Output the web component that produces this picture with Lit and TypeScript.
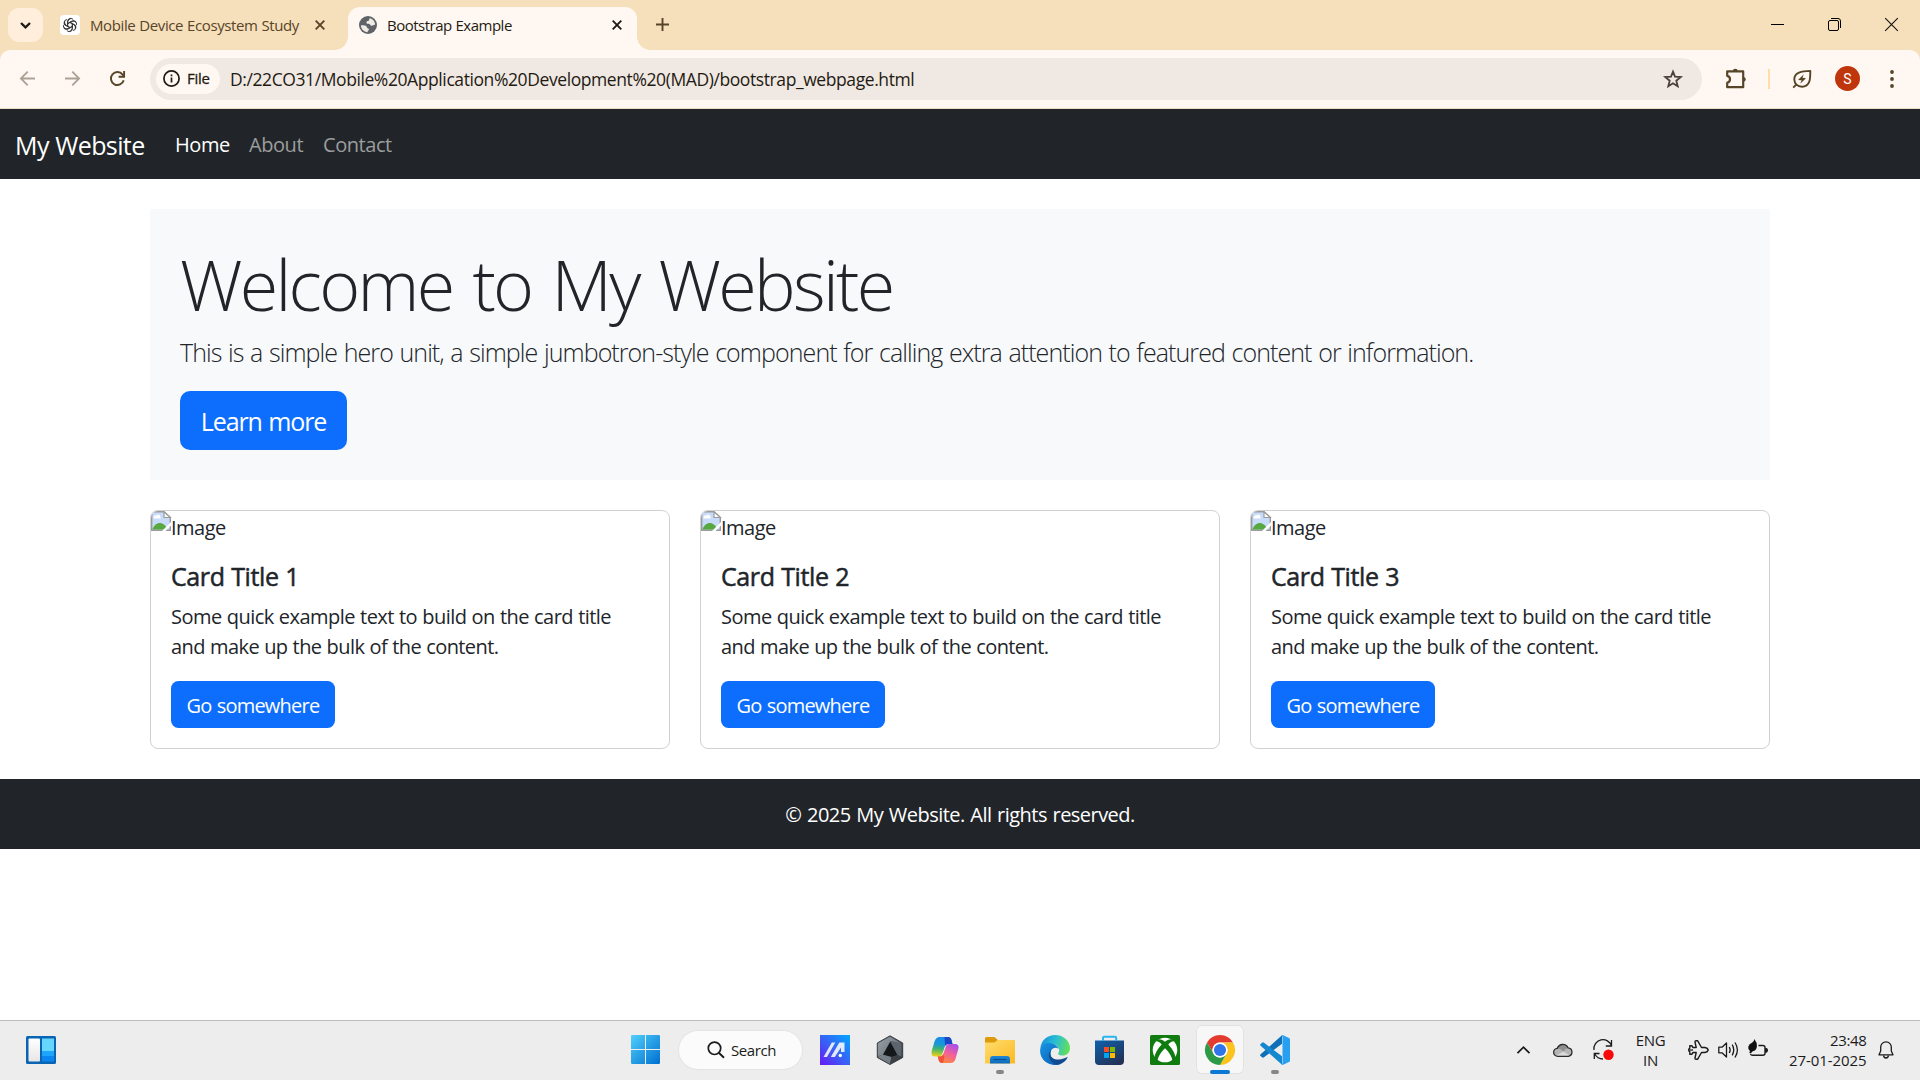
import { LitElement, html, css, nothing } from "lit";
import { customElement, property } from "lit/decorators.js";

const base = css`
  * { box-sizing: border-box; }
  svg { display: block; flex: none; overflow: visible; }
  span { white-space: nowrap; }
`;

/* ---------- browser window frame ---------- */

const gptIcon = html`<svg width="20" height="20" viewBox="0 0 20 20"><rect width="20" height="20" rx="4" fill="#fff"/>
  <g fill="none" stroke="#333" stroke-width=".95" transform="translate(10 10)">
    <g id="petal"><path d="M-2.400 1.400V-3.400Q-2.300 -6.400 .4 -6.600 2.200 -6.700 3.200 -5.400M-2.400 -1.200 1.700 -3.600Q4.300 -4.700 6 -2.600"/></g>
    <use href="#petal" transform="rotate(60)"/><use href="#petal" transform="rotate(120)"/><use href="#petal" transform="rotate(180)"/><use href="#petal" transform="rotate(240)"/><use href="#petal" transform="rotate(300)"/>
  </g></svg>`;

const globeIcon = html`<svg width="18" height="18" viewBox="0 0 18 18"><circle cx="9" cy="9" r="9" fill="#5f6368"/>
  <path d="M10.500 2.200C14 2.700 16 5.500 16.200 8.600 14.800 8.800 14.200 9.800 12.800 9.800 11.200 9.800 11.600 8.200 10.300 7.900 9 7.700 7.600 7.900 7.400 6.500 7.300 5.200 8.500 5 9.500 4.800 10.600 4.400 9.900 3 10.500 2.200Z" fill="#fff8f2" opacity=".9"/>
  <path d="M1.900 9.300C3.500 9.300 5.500 9.100 7 10 8.300 10.800 7.800 12.200 9.200 12.600 10.300 13 10.200 14 9.300 14.500 8.600 15 8.700 15.800 8.500 16.200 4.800 15.900 1.900 12.900 1.900 9.300Z" fill="#fff8f2" opacity=".9"/></svg>`;

const closeIcon = (color: string) => html`<svg width="10" height="10" viewBox="0 0 10 10"><path d="M.7.7 9.300 9.300M9.300.7.7 9.300" stroke=${color} stroke-width="1.900" fill="none"/></svg>`;

@customElement("browser-frame")
class BrowserFrame extends LitElement {
  static styles = [base, css`
    :host { display: flex; flex-direction: column; height: 109px; background: #f6dfbb; color: #1f1b13; font: 15px/20px "Open Sans", "Noto Sans", sans-serif; }
    .tabs { display: flex; height: 50px; padding-left: 8px; }
    .finder { width: 35px; height: 34px; margin-top: 8px; border-radius: 11px; background: #ffeedb; display: grid; place-items: center; }
    .tab { display: flex; align-items: center; height: 50px; width: 305px; padding-left: 17px; color: #564529; }
    .name { margin-left: 10px; width: 225px; letter-spacing: -0.39px; word-spacing: 0.4px; padding-bottom: 1px; }
    .active { position: relative; width: 289px; height: 43px; margin-top: 7px; padding: 0 0 7px 11px; background: #fff8f2; border-radius: 12px 12px 0 0; color: #1f1b13; }
    .active .name { letter-spacing: -0.5px; }
    .active::before, .active::after { content: ""; position: absolute; bottom: 0; width: 13px; height: 13px; }
    .active::before { left: -13px; background: radial-gradient(circle at 0 0, transparent 12.5px, #fff8f2 13px); }
    .active::after { right: -13px; background: radial-gradient(circle at 100% 0, transparent 12.5px, #fff8f2 13px); }
    .plus { margin: 18px 0 0 19px; }
    .win { display: flex; gap: 44px; margin: 18px 22px 0 auto; }
    .bar { display: flex; align-items: center; height: 59px; padding: 0 0 1px 20px; background: #fff8f2; border-radius: 10px 10px 0 0; border-bottom: 1px solid #ecdcc3; }
    .nav { display: flex; gap: 30px; width: 130px; }
    .omni { display: flex; align-items: center; width: 1552px; height: 42px; padding: 0 19px 0 6px; border-radius: 21px; background: #f0e8e2; }
    .chip { display: flex; align-items: center; gap: 7px; width: 64px; height: 30px; padding-left: 7px; border-radius: 15px; background: #fff8f2; letter-spacing: -0.3px; -webkit-text-stroke: 0.3px #1f1b13; }
    .chip span { padding-bottom: 1px; }
    .url { flex: 1; margin-left: 10px; font-size: 17.5px; line-height: 24px; letter-spacing: -0.41px; padding-top: 1px; }
    .puzzle { margin-left: 23px; }
    .sep { width: 2px; height: 20px; margin: 0 22px 0 21px; background: #ffdea6; }
    .avatar { width: 25px; height: 25px; margin: 0 30px 0 23px; border-radius: 50%; background: #bf360c; color: #fff; font: 14px/26px Roboto, "Open Sans", sans-serif; text-align: center; }
  `];
  render() {
    return html`
      <div class="tabs">
        <div class="finder"><svg width="11" height="7" viewBox="0 0 11 7"><path d="M1 1 5.500 5.400 10 1" fill="none" stroke="#1f1b13" stroke-width="2.300"/></svg></div>
        <div class="tab">${gptIcon}<span class="name">Mobile Device Ecosystem Study</span>${closeIcon("#564529")}</div>
        <div class="tab active">${globeIcon}<span class="name">Bootstrap Example</span>${closeIcon("#1f1b13")}</div>
        <svg class="plus" width="13" height="13" viewBox="0 0 13 13"><path d="M6.500 0V13M0 6.500H13" stroke="#564529" stroke-width="1.900"/></svg>
        <div class="win">
          <svg width="13" height="13" viewBox="0 0 13 13"><path d="M0 6.500H13" stroke="#000" stroke-width="1"/></svg>
          <svg width="13" height="13" viewBox="0 0 13 13"><rect x=".5" y="2.500" width="10" height="10" rx="1.500" fill="none" stroke="#000"/><path d="M3 .5H10Q12.500.5 12.500 3V10" fill="none" stroke="#000"/></svg>
          <svg width="13" height="13" viewBox="0 0 13 13"><path d="M.2.2 12.800 12.800M12.800.2.2 12.800" stroke="#111" stroke-width="1.100"/></svg>
        </div>
      </div>
      <div class="bar">
        <div class="nav">
          <svg width="15" height="15" viewBox="0 0 15 15"><path d="M15 7.500H1.500M7.700.7.900 7.500 7.700 14.300" fill="none" stroke="#aba296" stroke-width="1.800"/></svg>
          <svg width="15" height="15" viewBox="0 0 15 15"><path d="M0 7.500H13.500M7.300.7 14.100 7.500 7.300 14.300" fill="none" stroke="#aba296" stroke-width="1.800"/></svg>
          <svg width="15" height="15" viewBox="0 0 15 15"><path d="M13.700 9.200A6.500 6.500 0 1 1 12.600 3.600L14 5.200" fill="none" stroke="#564529" stroke-width="1.900"/><path d="M14.100 0V5.800H8.600" fill="none" stroke="#564529" stroke-width="1.900"/></svg>
        </div>
        <div class="omni">
          <div class="chip"><svg width="17" height="17" viewBox="0 0 17 17"><circle cx="8.500" cy="8.500" r="7.600" fill="none" stroke="#1f1b13" stroke-width="1.700"/><path d="M8.500 7.600V12.500M8.500 4.500V6.200" stroke="#1f1b13" stroke-width="1.700"/></svg><span>File</span></div>
          <span class="url">D:/22CO31/Mobile%20Application%20Development%20(MAD)/bootstrap_webpage.html</span>
          <svg width="20" height="20" viewBox="0 0 20 20"><path d="M10 2.600 12 7.700 17.700 8.100 13.300 11.700 14.700 17.200 10 14.200 5.300 17.200 6.700 11.700 2.300 8.100 8 7.700Z" fill="none" stroke="#4a4239" stroke-width="1.800"/></svg>
        </div>
        <svg class="puzzle" width="22" height="22" viewBox="0 0 22 22"><path d="M3 3.400H18.200V19.200H2.200V14.800Q5 14.200 5 11.300 5 8.400 2.200 7.800V3.400Z" fill="none" stroke="#564529" stroke-width="2.200" stroke-linejoin="round"/><path d="M7.800 3Q8 .7 10.300.7 12.600.7 12.800 3ZM18.500 9Q20.800 9.200 20.800 11.300 20.800 13.500 18.500 13.700Z" fill="#564529"/></svg>
        <div class="sep"></div>
        <svg width="20" height="20" viewBox="0 0 20 20"><path d="M18.300 1.900C18.300 9 18.500 17.600 10 17.700 5.500 17.700 2.300 14.700 2.300 10.300 2.300 3.500 9.500 1.900 18.300 1.900Z" fill="none" stroke="#564529" stroke-width="1.900" stroke-linejoin="round"/><path d="M1.200 18.600 4.600 15.300" stroke="#564529" stroke-width="1.900"/><path d="M11.800 5.200 6 10.900 9.600 11.300 8.200 14.800 14 9.300 10.500 8.800Z" fill="#564529"/></svg>
        <div class="avatar">S</div>
        <svg width="4" height="18" viewBox="0 0 4 18"><g fill="#564529"><circle cx="2" cy="2" r="1.900"/><circle cx="2" cy="9" r="1.900"/><circle cx="2" cy="16" r="1.900"/></g></svg>
      </div>`;
  }
}

/* ---------- page content ---------- */

@customElement("site-card")
class SiteCard extends LitElement {
  static styles = [base, css`
    :host { display: flex; flex-direction: column; flex: 1; height: 239px; border: 1px solid #d0d1d2; border-radius: 8px; background: #fff; overflow: hidden; color: #212529; box-sizing: border-box; font: 20px/30px "Open Sans", "Noto Sans", sans-serif; }
    .pic { display: flex; height: 35px; }
    .alt { padding-top: 2px; letter-spacing: -0.5px; }
    .body { display: flex; flex-direction: column; align-items: flex-start; padding: 15px 20px; }
    .title { font-size: 25px; line-height: 30px; margin-bottom: 11px; letter-spacing: -0.4px; word-spacing: 0.6px; -webkit-text-stroke: 0.5px #212529; }
    .copy { display: flex; flex-direction: column; margin-bottom: 19px; letter-spacing: -0.54px; word-spacing: 0.5px; }
    .last { letter-spacing: -0.58px; }
    .btn { height: 47px; line-height: 49px; width: 164px; text-align: center; border-radius: 7.5px; background: #0d6efd; color: #fff; letter-spacing: -0.77px; word-spacing: 0.6px; }
  `];
  @property({ type: Number }) index = 1;
  render() {
    return html`
      <div class="pic">
        <svg width="20" height="20" viewBox="0 0 20 20"><path d="M.7 .7H13L19.300 6.500V19.300H.7Z" fill="#c9dbfb" stroke="#9b9b9b" stroke-width="1.400"/><path d="M13 .7V6.500H19.300Z" fill="#fff" stroke="#9b9b9b" stroke-width="1.200"/><path d="M2.500 7.500C2 4.500 5 3.500 6 4.500 7 2.500 10 4 9.500 7.500Z" fill="#fff"/><path d="M1.400 18.600C3 14 7 11 11 12.500 14 13.500 15.500 16 16.500 18.600Z" fill="#57a840"/><path d="M10.500 20.500 20.500 10.500V14L14 20.500Z" fill="#fff"/></svg>
        <span class="alt">Image</span>
      </div>
      <div class="body">
        <span class="title">Card Title ${this.index}</span>
        <div class="copy"><span>Some quick example text to build on the card title</span><span class="last">and make up the bulk of the content.</span></div>
        <span class="btn">Go somewhere</span>
      </div>`;
  }
}

@customElement("site-page")
class SitePage extends LitElement {
  static styles = [base, css`
    :host { display: flex; flex-direction: column; flex: 1; background: #fff; color: #212529; font: 20px/30px "Open Sans", "Noto Sans", sans-serif; }
    .navbar { display: flex; align-items: center; height: 70px; padding: 2px 0 0 15px; background: #212529; color: #fff; }
    .brand { width: 160px; font-size: 25px; letter-spacing: -0.6px; word-spacing: 0.5px; padding-bottom: 1px; }
    .link { width: 74px; letter-spacing: -0.45px; }
    .muted { color: #9b9d9e; }
    main { display: flex; flex-direction: column; gap: 30px; padding: 30px 150px; }
    .hero { display: flex; flex-direction: column; align-items: flex-start; height: 271px; padding: 33px 30px 30px; background: #f8f9fa; }
    .hero h1 { margin: 0 0 7px; font-size: 70px; line-height: 84px; font-weight: 300; letter-spacing: -2.7px; word-spacing: 4.5px; white-space: nowrap; }
    .lead { font-size: 25px; line-height: 38px; font-weight: 300; letter-spacing: -0.92px; word-spacing: 1px; margin-bottom: 20px; }
    .btn { width: 167px; height: 59px; line-height: 61px; border-radius: 10px; background: #0d6efd; color: #fff; font-size: 25px; letter-spacing: -1.1px; word-spacing: 1px; text-align: center; }
    .cards { display: flex; gap: 30px; }
    footer { height: 70px; padding-top: 21px; background: #212529; color: #fff; text-align: center; letter-spacing: -0.54px; word-spacing: 1px; }
  `];
  render() {
    return html`
      <div class="navbar"><span class="brand">My Website</span><span class="link">Home</span><span class="link muted">About</span><span class="link muted">Contact</span></div>
      <main>
        <div class="hero">
          <h1>Welcome to My Website</h1>
          <span class="lead">This is a simple hero unit, a simple jumbotron-style component for calling extra attention to featured content or information.</span>
          <span class="btn">Learn more</span>
        </div>
        <div class="cards">${[1, 2, 3].map((n) => html`<site-card .index=${n}></site-card>`)}</div>
      </main>
      <footer><span>© 2025 My Website. All rights reserved.</span></footer>`;
  }
}

/* ---------- desktop taskbar ---------- */

const apps = [
  { mark: "", icon: html`<svg width="30" height="30" viewBox="0 0 30 30"><defs><linearGradient id="aa" x1="0" y1="1" x2="1" y2="0"><stop offset="0" stop-color="#6a18f5"/><stop offset=".45" stop-color="#3b5cf5"/><stop offset="1" stop-color="#00a8ff"/></linearGradient></defs><rect width="30" height="30" fill="url(#aa)"/><path d="M3.500 22 11.800 7.500H15.300L7 22Z" fill="#fff" opacity=".85"/><path d="M10.800 22 19.300 7.500H24.500V17H21V12.500L14.800 22Z" fill="#fff" opacity=".85"/><circle cx="20.300" cy="20.500" r="1.700" fill="#fff"/></svg>` },
  { mark: "", icon: html`<svg width="30" height="30" viewBox="0 0 30 30"><defs><linearGradient id="hx" x1="0" y1="0" x2="1" y2="1"><stop offset="0" stop-color="#8a9299"/><stop offset=".5" stop-color="#4a5056"/><stop offset="1" stop-color="#22262a"/></linearGradient></defs><path d="M15 .8 27.700 8V22.500L15 29.500 2.300 22.500V8Z" fill="url(#hx)" stroke="#383d42" stroke-width="1"/><path d="M15 2 26.500 8.500 16 6 8 20 3 21V8.500Z" fill="#aab2b9" opacity=".5"/><path d="M15.300 6.500 22.500 20 16.500 22 8 19.700Z" fill="#15181b"/><path d="M15.300 6.500 26.500 8.500V22L22.500 20Z" fill="#5d656c"/><path d="M3 22 8 19.700 16.500 22 15 29Z" fill="#8d959c" opacity=".7"/><path d="M16.500 22 22.500 20 27 22 15 29Z" fill="#3a4046"/></svg>` },
  { mark: "", icon: html`<svg width="30" height="30" viewBox="0 0 30 30"><defs><linearGradient id="c1" x1=".3" y1="0" x2=".2" y2="1"><stop offset="0" stop-color="#1b8be8"/><stop offset=".35" stop-color="#1697d8"/><stop offset=".6" stop-color="#3cb371"/><stop offset="1" stop-color="#f4d30f"/></linearGradient><linearGradient id="c2" x1=".8" y1="0" x2=".3" y2="1"><stop offset="0" stop-color="#a44df0"/><stop offset=".5" stop-color="#f3609a"/><stop offset="1" stop-color="#ff8a3c"/></linearGradient></defs>
    <path d="M9.500 2H18Q20.500 2 21.500 5L22.500 9H18Q15.500 9 14.800 11.500L12.300 19Q11.500 21.500 9 21.500H5Q.5 21.500 1.700 16L4.500 6.500Q6 2 9.500 2Z" fill="url(#c1)"/><path d="M14.500 2H18Q20.500 2 21.500 5L22.500 9H18Q16 9 15.200 11Z" fill="#1c46c8"/><path d="M20.500 28H12Q9.500 28 8.700 25L7.700 21.500H10Q12.500 21.500 13.300 19L16 11Q16.800 8.800 19.500 9H25.500Q29.500 9.300 28.300 14L25.500 24Q24.300 28 20.500 28Z" fill="url(#c2)"/><path d="M7.700 21.500H10Q12.500 21.500 13.300 19L14.500 22 13 28H12Q9.500 28 8.700 25Z" fill="#f0523a"/></svg>` },
  { mark: "dot", icon: html`<svg width="30" height="30" viewBox="0 0 30 30"><defs><linearGradient id="fo" x1="0" y1="0" x2="1" y2="1"><stop offset="0" stop-color="#ffdd6e"/><stop offset="1" stop-color="#fbb921"/></linearGradient><linearGradient id="fb" x1="0" y1="0" x2="0" y2="1"><stop offset="0" stop-color="#1c86d6"/><stop offset="1" stop-color="#0f6cbd"/></linearGradient></defs><path d="M0 3.500Q0 2 1.500 2H9.500L12.800 5H28.500Q30 5 30 6.500V14H0Z" fill="#dd9a0a"/><path d="M0 7.500H9.500L12.500 5H28.700Q30 5 30 6.500V28.500H0Z" fill="url(#fo)"/><path d="M5 28.500V24Q5 21 8 21H22Q25 21 25 24V28.500Z" fill="url(#fb)"/><path d="M8.500 24.500H21.500" stroke="#0b4f8f" stroke-width="1.200"/></svg>` },
  { mark: "", icon: html`<svg width="30" height="30" viewBox="0 0 30 30"><defs><linearGradient id="e1" x1="0" y1=".3" x2="1" y2=".5"><stop offset="0" stop-color="#1590dc"/><stop offset=".5" stop-color="#2bbfd2"/><stop offset="1" stop-color="#62e05a"/></linearGradient><linearGradient id="e2" x1="0" y1="0" x2=".8" y2="1"><stop offset="0" stop-color="#1795e4"/><stop offset="1" stop-color="#0b62b8"/></linearGradient></defs>
    <path d="M.3 13C1.500 5 7.500 0 15 0 24 0 30 6.500 30 13 30 18 26.500 20.500 22.500 20.500 19 20.500 17.500 19.300 18.500 17.800 20.500 15 18.500 10.300 13 9.300 7.500 8.300 2 10.500.3 13Z" fill="url(#e1)"/><path d="M.2 14C1.500 9.500 6 7.500 10.500 8.200 15 9 18 11 19 14.500 17.500 11.800 12.500 12 11 16 9.500 21 13 28.500 20.500 29 18.500 30 15 30.200 12.500 29.800 4.500 28.500-.8 21.500.2 14Z" fill="url(#e2)"/><path d="M11 15C8.500 20 11.500 24 17 24.500 21.500 25 25 23 27.800 21.800 26.500 25.500 23 28.500 18.500 29.600 10.500 29.500 6 20 11 15Z" fill="#114a8f"/><path d="M12 15A4.200 4.200 0 0 1 19 16.500 19.500 18.500 17 18.800 18.800 19.800 15.500 21.500 11.500 18.500 12 15Z" fill="#ededed"/></svg>` },
  { mark: "", icon: html`<svg width="30" height="30" viewBox="0 0 30 30"><defs><linearGradient id="st" x1="0" y1="0" x2=".7" y2="1"><stop offset="0" stop-color="#0f62ad"/><stop offset="1" stop-color="#223257"/></linearGradient></defs><path d="M0 5.500H29V26Q29 30 25 30H4Q0 30 0 26Z" fill="url(#st)"/><path d="M8 6V3Q8 1.800 9.200 1.800H20Q21.200 1.800 21.200 3V6" fill="none" stroke="#2bb5ee" stroke-width="2"/><path d="M9 12H14V17H9Z" fill="#f25022"/><path d="M15 12H20V17H15Z" fill="#7fba00"/><path d="M9 18H14V23H9Z" fill="#00a4ef"/><path d="M15 18H20V23H15Z" fill="#ffb900"/></svg>` },
  { mark: "", icon: html`<svg width="30" height="30" viewBox="0 0 30 30"><rect width="30" height="30" rx="1.500" fill="#107c10"/><circle cx="15" cy="15" r="12.300" fill="#fff"/><path d="M7.500 4.500C10 3.700 13 5 15 6.700 17 5 20 3.700 22.500 4.500L25 6.500C22.500 5.500 20 7.500 18.300 9.600 22.500 14 26 20 25.300 23.500L22.500 26.200C22.500 22.500 19 17 15 13.200 11 17 7.500 22.500 7.500 26.200L4.700 23.500C4 20 7.500 14 11.700 9.600 10 7.500 7.500 5.500 5 6.500Z" fill="#107c10"/></svg>` },
  { mark: "wide", icon: html`<svg width="30" height="30" viewBox="0 0 48 48"><path d="M24 12H44.800A24 24 0 0 0 3.200 12L13.600 30A12 12 0 0 1 24 12Z" fill="#e33b2e"/><path d="M24 12H44.800A24 24 0 0 1 24 48L34.400 30A12 12 0 0 0 24 12Z" fill="#fcc31e"/><path d="M13.600 30 3.200 12A24 24 0 0 0 24 48L34.400 30A12 12 0 0 1 13.600 30Z" fill="#2d9a48"/><circle cx="24" cy="24" r="12" fill="#fff"/><circle cx="24" cy="24" r="9.700" fill="#2f74e8"/></svg>` },
  { mark: "dot", icon: html`<svg width="30" height="30" viewBox="0 0 30 30"><path d="M.6 19.300 22 .3V8.800L4 22.300Q3 23 2 22.200L.6 21Q-.4 20.200.6 19.300Z" fill="#0f70b7"/><path d="M.6 10.700 22 29.700V21.200L4 7.700Q3 7 2 7.800L.6 9Q-.4 9.800.6 10.700Z" fill="#1387cf"/><path d="M22 .2Q22.500-.2 23.200.2L29 3Q30 3.500 30 4.600V25.400Q30 26.500 29 27L23.200 29.800Q22.500 30.200 21.700 29.500 22.500 29 22.500 27.500V2.500Q22.500 1 21.700.5Z" fill="#27a0f2"/></svg>` },
];

@customElement("desk-taskbar")
class DeskTaskbar extends LitElement {
  static styles = [base, css`
    :host { display: flex; align-items: center; height: 60px; padding: 0 0 2px 26px; border-top: 1px solid #bcbcbc; background: #ededed; color: #1b1b1b; font: 15px/20px "Open Sans", "Noto Sans", sans-serif; box-sizing: border-box; }
    .start { margin-left: 575px; }
    .search { display: flex; align-items: center; width: 123px; height: 38px; margin: 0 18px 0 19px; padding-left: 28px; border-radius: 19px; background: #fbfbfb; box-shadow: 0 0 0 1px #e4e4e4; letter-spacing: -0.4px; }
    .search span { margin-left: 6px; }
    .apps { display: flex; gap: 25px; }
    .app { position: relative; width: 30px; height: 30px; }
    .app svg { position: relative; }
    .running::before { content: ""; position: absolute; left: -9px; top: -9.500px; width: 48px; height: 49px; border-radius: 6px; background: #f7f7f7; box-shadow: inset 0 0 0 1px #e2e2e2; }
    .mark { position: absolute; top: 35px; left: 11px; width: 8px; height: 4px; border-radius: 2px; background: #868686; }
    .running .mark { left: 5px; width: 20px; background: #0a78d4; }
    .tray { display: flex; align-items: center; margin-left: 226.500px; }
    .cloud { margin-left: 23px; }
    .sync { margin-left: 20px; }
    .plane { margin-left: 22px; }
    .sound { margin-left: 9px; }
    .power { margin: -4px 0 0 9px; }
    .bell { margin-left: 11px; }
    .lang, .clock { display: flex; flex-direction: column; }
    .lang { width: 30px; margin-left: 23px; align-items: center; letter-spacing: -0.3px; }
    .clock { width: 78px; margin-left: 20px; align-items: flex-end; }
    .time { letter-spacing: -0.35px; }
    .date { letter-spacing: -0.08px; }
  `];
  render() {
    return html`
      <svg width="30" height="28" viewBox="0 0 30 28"><defs><linearGradient id="w1" x1="0" y1="0" x2="0" y2="1"><stop offset="0" stop-color="#fff"/><stop offset="1" stop-color="#e6e6e6"/></linearGradient></defs><rect width="30" height="28" rx="1.500" fill="#0a64b4"/><rect x="2.500" y="2.500" width="11.500" height="23" rx="1" fill="url(#w1)"/><path d="M16 2.500H28V15H16Z" fill="#66d6ff"/><path d="M16 15H28V20H16Z" fill="#1ea5fb"/><path d="M16 20H28V25.500H16Z" fill="#0a86ee"/></svg>
      <svg class="start" width="29" height="29" viewBox="0 0 29 29"><defs><linearGradient id="wl" gradientUnits="userSpaceOnUse" x1="0" y1="0" x2="29" y2="29"><stop offset="0" stop-color="#4fd0fb"/><stop offset="1" stop-color="#006fd0"/></linearGradient></defs><path d="M1.200 0H14V14H0V1.200Q0 0 1.200 0ZM15 0H27.800Q29 0 29 1.200V14H15ZM0 15H14V29H1.200Q0 29 0 27.800ZM15 15H29V27.800Q29 29 27.800 29H15Z" fill="url(#wl)"/></svg>
      <div class="search"><svg width="18" height="18" viewBox="0 0 18 18"><circle cx="7.500" cy="7.300" r="6.200" fill="none" stroke="#1b1b1b" stroke-width="1.700"/><path d="M11.800 11.700 17 16.800" stroke="#1b1b1b" stroke-width="1.900"/></svg><span>Search</span></div>
      <div class="apps">${apps.map((a) => html`<div class="app ${a.mark === "wide" ? "running" : ""}">${a.icon}${a.mark ? html`<i class="mark"></i>` : nothing}</div>`)}</div>
      <div class="tray">
        <svg width="13" height="8" viewBox="0 0 13 8"><path d="M.5 7.200 6.500 1.200 12.500 7.200" fill="none" stroke="#1b1b1b" stroke-width="1.700"/></svg>
        <svg class="cloud" width="20" height="14" viewBox="0 0 20 14"><path d="M5 13.300A4 4 0 0 1 4.300 5.300 5.800 5.800 0 0 1 15 4.800 4.300 4.300 0 0 1 15.500 13.300Z" fill="#b5b5b5"/><path d="M4.300 5.300A5.800 5.800 0 0 1 15 4.800Q13 5 10.500 8.500 7.500 5.500 4.300 5.300Z" fill="#8e8e8e"/><path d="M3 12.800 10.500 8.500 17.500 13.300H5Z" fill="#dadada"/><path d="M5 13.300A4 4 0 0 1 4.300 5.300 5.800 5.800 0 0 1 15 4.800 4.300 4.300 0 0 1 15.500 13.300Z" fill="none" stroke="#2c2c2c" stroke-width="1.300"/></svg>
        <svg class="sync" width="20" height="21" viewBox="0 0 20 21"><path d="M1 11A9 9 0 0 1 18.500 7M18.500 1V7H12.800M1.300 20V14.500H6.500M1.500 14.800Q4.500 20 10 20" fill="none" stroke="#1b1b1b" stroke-width="1.300"/><circle cx="15.500" cy="15.800" r="5.200" fill="#f80808"/></svg>
        <div class="lang"><span>ENG</span><span>IN</span></div>
        <svg class="plane" width="21" height="20" viewBox="0 0 21 20"><path d="M8.200 7.500 7 2Q6.900.7 8.200.8H9.700L13.500 7.500H17Q19.800 8 20.200 10 19.800 12 17 12.500H13.500L9.700 19.200H8.200Q6.900 19.300 7 18L8.200 12.500H5L3.800 14.300H1.800V11.800L.8 11V9L1.800 8.200V5.700H3.800L5 7.500Z" fill="none" stroke="#1b1b1b" stroke-width="1.400" stroke-linejoin="round"/><path d="M1 10H5" stroke="#1b1b1b" stroke-width="1.300"/></svg>
        <svg class="sound" width="21" height="18" viewBox="0 0 21 18"><path d="M.8 6.200H4L8.500 2V16L4 11.800H.8Z" fill="none" stroke="#1b1b1b" stroke-width="1.300" stroke-linejoin="round"/><path d="M11.300 6Q13 9 11.300 12M14.200 3.700Q17.300 9 14.200 14.300M17 1.500Q21.800 9 17 16.500" fill="none" stroke="#1b1b1b" stroke-width="1.300"/></svg>
        <svg class="power" width="21" height="18" viewBox="0 0 21 18"><path d="M2.500 15Q3 16.300 4.500 16.300H14.800Q17 16.300 17 14.300V8.500Q17 6.500 14.800 6.500H10.500" fill="none" stroke="#1b1b1b" stroke-width="1.400"/><path d="M17 9H18.500Q20 9.300 20 11.300 20 13.300 18.500 13.700H17Z" fill="#1b1b1b"/><path d="M6.300 0Q9.300 3.500 8.900 7.500 8.500 11.500 4.800 12.300L2.500 14.500 1.300 13.700 2 12Q-.3 10.500.3 7.800 1 5 4 3.800 6.200 2.800 6.300 0Z" fill="#111"/></svg>
        <div class="clock"><span class="time">23:48</span><span class="date">27-01-2025</span></div>
        <svg class="bell" width="16" height="18" viewBox="0 0 16 18"><path d="M8 .8A5.300 5.300 0 0 0 2.700 6.100V10L1 13.800H15L13.300 10V6.100A5.300 5.300 0 0 0 8 .8Z" fill="none" stroke="#1b1b1b" stroke-width="1.300" stroke-linejoin="round"/><path d="M5.500 14.500Q6 17 8 17T10.500 14.500" fill="none" stroke="#1b1b1b" stroke-width="1.300"/></svg>
      </div>`;
  }
}

@customElement("app-root")
class AppRoot extends LitElement {
  static styles = css`
    :host { display: flex; flex-direction: column; width: 1920px; height: 1080px; overflow: hidden; background: #fff; }
  `;
  render() {
    return html`<browser-frame></browser-frame><site-page></site-page><desk-taskbar></desk-taskbar>`;
  }
}
